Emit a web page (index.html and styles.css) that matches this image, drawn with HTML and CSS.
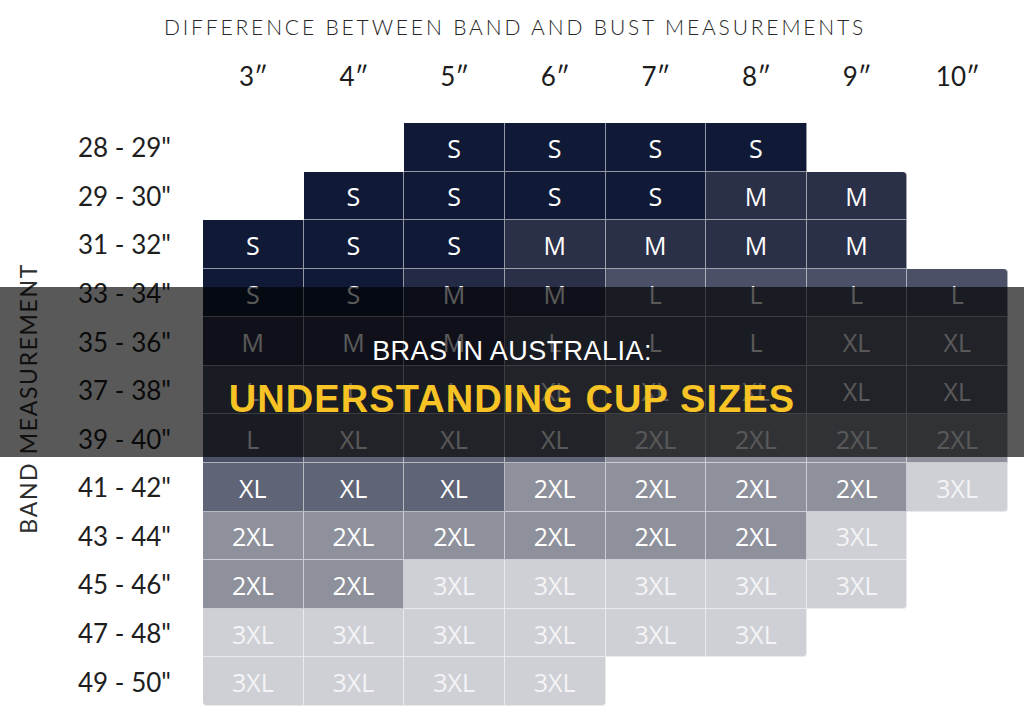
FILE: index.html
```html
<!DOCTYPE html>
<html lang="en">
<head>
<meta charset="utf-8">
<title>Bras in Australia: Understanding Cup Sizes</title>
<link rel="stylesheet" href="styles.css">
</head>
<body>
<div class="page">
  <h1 class="title">DIFFERENCE BETWEEN BAND AND BUST MEASUREMENTS</h1>
  <div class="heads">
    <span class="spacer"></span>
    <span>3″</span><span>4″</span><span>5″</span><span>6″</span><span>7″</span><span>8″</span><span>9″</span><span>10″</span>
  </div>
  <div class="chart">
    <div class="axis">BAND MEASUREMENT</div>

    <div class="rl">28 - 29"</div>
    <div class="c e"></div><div class="c e"></div><div class="c s">S</div><div class="c s">S</div><div class="c s">S</div><div class="c s">S</div><div class="c e"></div><div class="c e"></div>

    <div class="rl">29 - 30"</div>
    <div class="c e"></div><div class="c s">S</div><div class="c s">S</div><div class="c s">S</div><div class="c s">S</div><div class="c m">M</div><div class="c m rtr">M</div><div class="c e"></div>

    <div class="rl">31 - 32"</div>
    <div class="c s">S</div><div class="c s">S</div><div class="c s">S</div><div class="c m">M</div><div class="c m">M</div><div class="c m">M</div><div class="c m">M</div><div class="c e"></div>

    <div class="rl">33 - 34"</div>
    <div class="c s">S</div><div class="c s">S</div><div class="c m2">M</div><div class="c m">M</div><div class="c l">L</div><div class="c l">L</div><div class="c l">L</div><div class="c l rtr">L</div>

    <div class="rl">35 - 36"</div>
    <div class="c m">M</div><div class="c m">M</div><div class="c m">M</div><div class="c l">L</div><div class="c l">L</div><div class="c l">L</div><div class="c xl">XL</div><div class="c xl">XL</div>

    <div class="rl">37 - 38"</div>
    <div class="c l">L</div><div class="c l">L</div><div class="c l">L</div><div class="c xl">XL</div><div class="c xl">XL</div><div class="c xl">XL</div><div class="c xl">XL</div><div class="c xl">XL</div>

    <div class="rl">39 - 40"</div>
    <div class="c l">L</div><div class="c xl">XL</div><div class="c xl">XL</div><div class="c xl">XL</div><div class="c x2">2XL</div><div class="c x2">2XL</div><div class="c x2">2XL</div><div class="c x2">2XL</div>

    <div class="rl">41 - 42"</div>
    <div class="c xl">XL</div><div class="c xl">XL</div><div class="c xl">XL</div><div class="c x2">2XL</div><div class="c x2">2XL</div><div class="c x2">2XL</div><div class="c x2">2XL</div><div class="c x3 rbr">3XL</div>

    <div class="rl">43 - 44"</div>
    <div class="c x2">2XL</div><div class="c x2">2XL</div><div class="c x2">2XL</div><div class="c x2">2XL</div><div class="c x2">2XL</div><div class="c x2">2XL</div><div class="c x3">3XL</div><div class="c e"></div>

    <div class="rl">45 - 46"</div>
    <div class="c x2">2XL</div><div class="c x2">2XL</div><div class="c x3">3XL</div><div class="c x3">3XL</div><div class="c x3">3XL</div><div class="c x3">3XL</div><div class="c x3 rbr">3XL</div><div class="c e"></div>

    <div class="rl">47 - 48"</div>
    <div class="c x3">3XL</div><div class="c x3">3XL</div><div class="c x3">3XL</div><div class="c x3">3XL</div><div class="c x3">3XL</div><div class="c x3 rbr">3XL</div><div class="c e"></div><div class="c e"></div>

    <div class="rl">49 - 50"</div>
    <div class="c x3 rbl">3XL</div><div class="c x3">3XL</div><div class="c x3">3XL</div><div class="c x3 rbr">3XL</div><div class="c e"></div><div class="c e"></div><div class="c e"></div><div class="c e"></div>
  </div>

  <div class="banner">
    <p class="kicker">BRAS IN AUSTRALIA:</p>
    <p class="headline">UNDERSTANDING CUP SIZES</p>
  </div>
</div>
</body>
</html>
```

FILE: styles.css
```css
html, body {
  margin: 0;
  padding: 0;
  background: #ffffff;
}

.page {
  position: relative;
  width: 1024px;
  height: 726px;
  overflow: hidden;
  padding-top: 16px;
  box-sizing: border-box;
  font-family: "Lato", "Open Sans", sans-serif;
}

.title {
  margin: 0;
  font-family: "Lato", sans-serif;
  font-weight: 300;
  font-size: 21px;
  line-height: 21px;
  letter-spacing: 2.85px;
  color: #262626;
  text-align: center;
  padding-left: 6px;
}

.heads {
  display: grid;
  grid-template-columns: 203px repeat(8, 100.625px);
  margin-top: 26px;
  height: 26px;
}

.heads span {
  font-family: "Lato", sans-serif;
  font-size: 26px;
  line-height: 26px;
  color: #1c1c1c;
  text-align: center;
}

.chart {
  display: grid;
  grid-template-columns: 78px 125px repeat(8, 100.625px);
  grid-template-rows: repeat(12, 48.58px);
  margin-top: 34px;
}

.axis {
  grid-column: 1;
  grid-row: 1 / -1;
  align-self: start;
  justify-self: start;
  margin-top: 140px;
  margin-left: 17px;
  writing-mode: vertical-rl;
  transform: rotate(180deg);
  font-family: "Lato", sans-serif;
  font-weight: 400;
  font-size: 23px;
  line-height: 23px;
  letter-spacing: 1.65px;
  color: #2e2e2e;
}

.rl {
  display: flex;
  align-items: center;
  font-family: "Lato", sans-serif;
  font-size: 26px;
  color: #1e1e1e;
  white-space: pre;
}

.c {
  display: flex;
  align-items: center;
  justify-content: center;
  box-sizing: border-box;
  border-right: 1px solid rgba(255, 255, 255, 0.55);
  border-bottom: 1px solid rgba(255, 255, 255, 0.55);
  font-family: "Open Sans", sans-serif;
  font-size: 25px;
  color: #ffffff;
  padding-top: 2px;
}

.c.e {
  border: none;
  background: transparent;
}

.s  { background: #101a36; }
.m  { background: #2b3049; }
.m2 { background: #222a45; }
.l  { background: #4b5066; }
.xl { background: #5f6476; }
.x2 { background: #8e919c; }
.x3 { background: #cfd0d5; color: #f4f4f6; }

.rtr { border-top-right-radius: 4px; }
.rbr { border-bottom-right-radius: 4px; }
.rbl { border-bottom-left-radius: 4px; }

.banner {
  position: absolute;
  left: 0;
  right: 0;
  top: 287px;
  height: 170px;
  background: rgba(0, 0, 0, 0.65);
  display: flex;
  flex-direction: column;
  align-items: center;
  padding-top: 51px;
  box-sizing: border-box;
  font-family: "Liberation Sans", Arial, sans-serif;
}

.banner p {
  margin: 0;
}

.kicker {
  font-size: 27px;
  line-height: 27px;
  letter-spacing: 0.45px;
  color: #ffffff;
}

.headline {
  margin-top: 15px !important;
  font-size: 38px;
  line-height: 38px;
  letter-spacing: 1.1px;
  font-weight: 700;
  color: #f7c325;
}
```
